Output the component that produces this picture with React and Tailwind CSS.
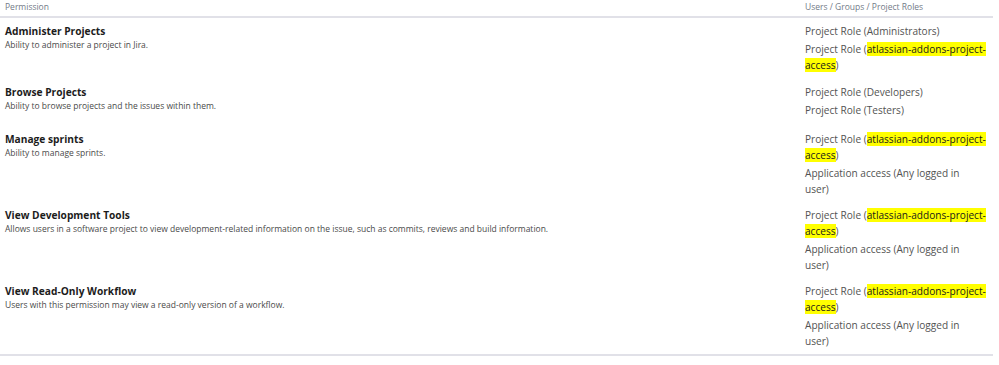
import React from 'react'

const HL = () => (
  <span className="bg-[#ffff00] text-[#1a1a1a]">atlassian-addons-project-access</span>
)

const addonsRole = <>Project Role (<HL />)</>
const anyUser = <span className="block max-w-[168px]">Application access (Any logged in user)</span>

const permissions = [
  {
    name: 'Administer Projects',
    desc: 'Ability to administer a project in Jira.',
    grants: [<>Project Role (Administrators)</>, addonsRole],
    pad: 'pb-[6px]',
  },
  {
    name: 'Browse Projects',
    desc: 'Ability to browse projects and the issues within them.',
    grants: [<>Project Role (Developers)</>, <>Project Role (Testers)</>],
    pad: 'pb-[8px]',
  },
  {
    name: 'Manage sprints',
    desc: 'Ability to manage sprints.',
    grants: [addonsRole, anyUser],
    pad: 'pb-[5px]',
  },
  {
    name: 'View Development Tools',
    desc: 'Allows users in a software project to view development-related information on the issue, such as commits, reviews and build information.',
    grants: [addonsRole, anyUser],
    pad: 'pb-[5px]',
  },
  {
    name: 'View Read-Only Workflow',
    desc: 'Users with this permission may view a read-only version of a workflow.',
    grants: [addonsRole, anyUser],
    pad: 'pb-[5px]',
  },
]

function App() {
  return (
    <div className="w-[993px] bg-white font-['Open_Sans',sans-serif]">
      <div className="flex h-[18px] border-b-2 border-[#e1e1e8] text-[8.5px] leading-[14px] text-[#737b88]">
        <div className="flex-1 pl-[5px]">Permission</div>
        <div className="w-[193px] pl-[5px]">Users / Groups / Project Roles</div>
      </div>

      <div className="border-b-2 border-[#e1e1e8]">
        {permissions.map((p) => (
          <div key={p.name} className={`flex pt-[5px] ${p.pad}`}>
            <div className="flex-1 pl-[5px]">
              <div className="text-[10.2px] leading-[16px] font-bold text-[#1c1c1c]">{p.name}</div>
              <div className="text-[8.5px] leading-[12px] text-[#4a4a4a]">{p.desc}</div>
            </div>
            <div className="w-[193px] pl-[5px] pr-[1px] flex flex-col gap-[2px] text-[10.1px] leading-[16px] text-[#535353]">
              {p.grants.map((g, i) => (
                <div key={i}>{g}</div>
              ))}
            </div>
          </div>
        ))}
      </div>
    </div>
  )
}

export default App
